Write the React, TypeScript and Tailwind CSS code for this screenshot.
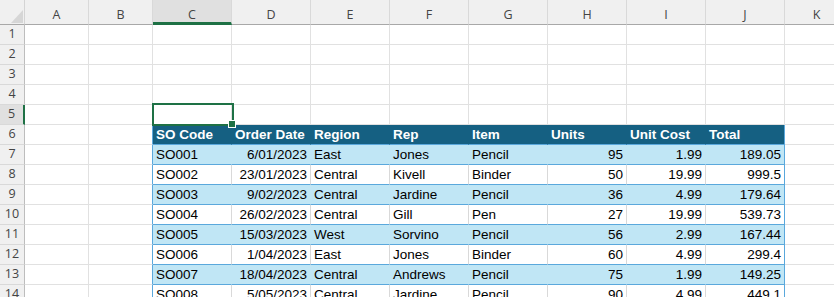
import React from "react";

const cols = ["A", "B", "C", "D", "E", "F", "G", "H", "I", "J", "K"];

type Row = string[];
const header: Row = ["SO Code", "Order Date", "Region", "Rep", "Item", "Units", "Unit Cost", "Total"];
const data: Row[] = [
  ["SO001", "6/01/2023", "East", "Jones", "Pencil", "95", "1.99", "189.05"],
  ["SO002", "23/01/2023", "Central", "Kivell", "Binder", "50", "19.99", "999.5"],
  ["SO003", "9/02/2023", "Central", "Jardine", "Pencil", "36", "4.99", "179.64"],
  ["SO004", "26/02/2023", "Central", "Gill", "Pen", "27", "19.99", "539.73"],
  ["SO005", "15/03/2023", "West", "Sorvino", "Pencil", "56", "2.99", "167.44"],
  ["SO006", "1/04/2023", "East", "Jones", "Binder", "60", "4.99", "299.4"],
  ["SO007", "18/04/2023", "Central", "Andrews", "Pencil", "75", "1.99", "149.25"],
  ["SO008", "5/05/2023", "Central", "Jardine", "Pencil", "90", "4.99", "449.1"],
];
const rightAligned = [1, 5, 6, 7];

function cellClass(r: number, c: number): { cls: string; text: string; right: boolean } {
  let cls = "border-r border-b border-[#e1e1e1] bg-white";
  let text = "";
  let right = false;
  const inTable = r >= 6 && c >= 3 && c <= 10;
  if (c === 2 && r >= 6) {
    cls = "border-r border-b bg-white border-b-[#e1e1e1] border-r-[#5aa8dc]";
  }
  if (inTable) {
    const ci = c - 3;
    const isLast = c === 10;
    if (r === 6) {
      text = header[ci];
      cls =
        "bg-[#156082] text-white font-bold border-b border-r border-b-[#5aa8dc] " +
        (isLast ? "border-r-[#5aa8dc]" : "border-r-[#156082]");
    } else {
      const di = r - 7;
      text = data[di][ci];
      right = rightAligned.includes(ci);
      const banded = di % 2 === 0;
      cls =
        (banded ? "bg-[#c0e6f5] " : "bg-white ") +
        "border-b border-r border-b-[#5aa8dc] " +
        (isLast ? "border-r-[#5aa8dc]" : banded ? "border-r-[#c0e6f5]" : "border-r-[#d9d9d9]");
    }
  }
  return { cls, text, right };
}

export default function App() {
  const rows = Array.from({ length: 14 }, (_, i) => i + 1);
  return (
    <div
      className="relative w-[834px] h-[297px] overflow-hidden bg-white"
      style={{ fontFamily: '"Liberation Sans", Arial, sans-serif' }}
    >
      <div className="grid grid-cols-[25px_64px_64px_79px_79px_79px_79px_79px_79px_79px_79px_64px] grid-rows-[25px_repeat(14,20px)] w-max">
        <div className="bg-[#f0f0f0] border-r border-b border-r-[#d4d4d4] border-b-[#a8a8a8] flex items-end justify-end pr-[1px] pb-[1px]">
          <svg width="12" height="13" viewBox="0 0 12 13">
            <polygon points="12,0 12,13 0,13" fill="#d6d6d6" />
          </svg>
        </div>
        {cols.map((c) => {
          const sel = c === "C";
          return (
            <div
              key={c}
              className={
                "flex justify-center pt-[9px] text-[12.5px] leading-[12px] text-[#444] border-r border-r-[#d9d9d9] " +
                (sel ? "bg-[#e0e0e0] border-b-[3px] border-b-[#1e7145]" : "bg-[#f0f0f0] border-b border-b-[#a8a8a8]")
              }
              style={{ fontFamily: '"Open Sans", sans-serif' }}
            >
              {c}
            </div>
          );
        })}
        {rows.map((r) => (
          <React.Fragment key={r}>
            <div
              className={
                "flex items-center justify-center text-[12.5px] text-[#444] border-b border-b-[#d9d9d9] " +
                (r === 5 ? "bg-[#e0e0e0] border-r-2 border-r-[#1e7145]" : "bg-[#f0f0f0] border-r border-r-[#bdbdbd]")
              }
              style={{ fontFamily: '"Open Sans", sans-serif' }}
            >
              {r}
            </div>
            {cols.map((_, ci) => {
              const { cls, text, right } = cellClass(r, ci + 1);
              return (
                <div
                  key={ci}
                  className={
                    "flex items-center pt-[1px] px-[3px] text-[13.5px] whitespace-nowrap overflow-hidden text-black " +
                    (right ? "justify-end " : "justify-start ") +
                    cls
                  }
                >
                  {text}
                </div>
              );
            })}
          </React.Fragment>
        ))}
      </div>
      <div className="absolute left-[152px] top-[103px] w-[82px] h-[23px] border-2 border-[#1e7145]" />
      <div className="absolute left-[229px] top-[121px] w-[6px] h-[6px] bg-[#1e7145] outline outline-1 outline-white" />
    </div>
  );
}
